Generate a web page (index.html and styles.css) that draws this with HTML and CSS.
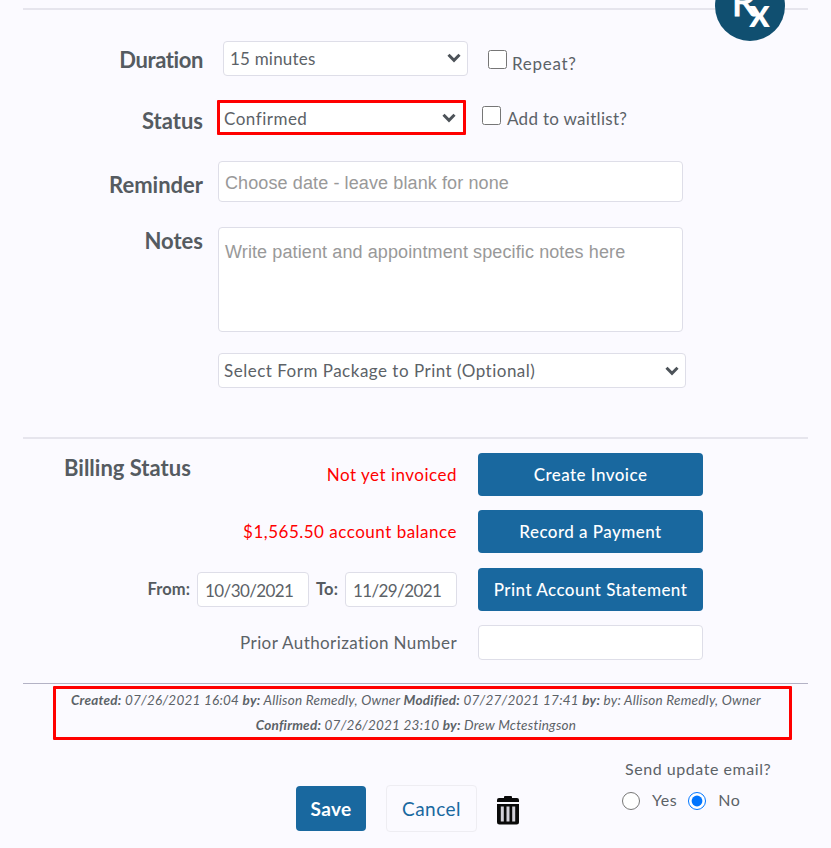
FILE: index.html
```
<!DOCTYPE html>
<html lang="en">

<head>
    <meta charset="UTF-8">
    <meta name="viewport" content="width=device-width, initial-scale=1.0">
    <title>Edit Appointment</title>
    <link rel="stylesheet" href="styles.css">
</head>

<body>
    <svg class="rx-badge" width="72" height="72" viewBox="0 0 72 72">
        <circle cx="36" cy="36" r="35" fill="#104f70" />
        <text class="rx-r" x="17.5" y="46">R</text>
        <text class="rx-x" x="35" y="57">x</text>
    </svg>

    <form class="container">
        <section class="details">
            <div class="form-row duration-row">
                <label class="row-label" for="duration">Duration</label>
                <div class="select-box duration-select">
                    <select id="duration">
                        <option>15 minutes</option>
                    </select>
                    <svg class="chevron" width="14" height="10" viewBox="0 0 14 10"><path d="M1.5 1.8 L7 7.3 L12.5 1.8" /></svg>
                </div>
                <input type="checkbox" id="repeat">
                <label class="check-label" for="repeat">Repeat?</label>
            </div>

            <div class="form-row status-row">
                <label class="row-label" for="status">Status</label>
                <div class="select-box status-select highlight">
                    <select id="status">
                        <option>Confirmed</option>
                    </select>
                    <svg class="chevron" width="14" height="10" viewBox="0 0 14 10"><path d="M1.5 1.8 L7 7.3 L12.5 1.8" /></svg>
                </div>
                <input type="checkbox" id="waitlist">
                <label class="check-label" for="waitlist">Add to waitlist?</label>
            </div>

            <div class="form-row reminder-row">
                <label class="row-label" for="reminder">Reminder</label>
                <input type="text" class="field" id="reminder" placeholder="Choose date - leave blank for none">
            </div>

            <div class="form-row notes-row">
                <label class="row-label" for="notes">Notes</label>
                <textarea class="field" id="notes" placeholder="Write patient and appointment specific notes here"></textarea>
            </div>

            <div class="form-row package-row">
                <div class="select-box package-select">
                    <select id="package">
                        <option>Select Form Package to Print (Optional)</option>
                    </select>
                    <svg class="chevron" width="14" height="10" viewBox="0 0 14 10"><path d="M1.5 1.8 L7 7.3 L12.5 1.8" /></svg>
                </div>
            </div>
        </section>

        <section class="billing">
            <h2>Billing Status</h2>
            <div class="billing-grid">
                <span class="alert">Not yet invoiced</span>
                <button type="button" class="btn">Create Invoice</button>

                <span class="alert">$1,565.50 account balance</span>
                <button type="button" class="btn">Record a Payment</button>

                <div class="date-range">
                    <label for="from">From:</label>
                    <input type="text" class="date" id="from" value="10/30/2021">
                    <label for="to">To:</label>
                    <input type="text" class="date" id="to" value="11/29/2021">
                </div>
                <button type="button" class="btn">Print Account Statement</button>

                <label class="auth-label" for="auth">Prior Authorization Number</label>
                <input type="text" class="field auth" id="auth">
            </div>
        </section>

        <section class="history highlight">
            <p><b>Created:</b> 07/26/2021 16:04 <b>by:</b> Allison Remedly, Owner <b>Modified:</b> 07/27/2021 17:41 <b>by:</b> by: Allison Remedly, Owner</p>
            <p><b>Confirmed:</b> 07/26/2021 23:10 <b>by:</b> Drew Mctestingson</p>
        </section>

        <footer class="actions">
            <button type="button" class="btn save">Save</button>
            <button type="button" class="btn cancel">Cancel</button>
            <svg class="trash" width="24" height="29" viewBox="0 0 24 29">
                <path d="M8 2 V1 Q8 0 9 0 H15 Q16 0 16 1 V2 H21 Q23 2 23 4 V6 H1 V4 Q1 2 3 2 Z" />
                <path d="M1 8 H23 V26 Q23 28.5 20.5 28.5 H3.5 Q1 28.5 1 26 Z" />
                <path class="slot" d="M6.3 10.5 V25.5 M12 10.5 V25.5 M17.7 10.5 V25.5" />
            </svg>
            <div class="email">
                <p>Send update email?</p>
                <div class="email-options">
                    <input type="radio" name="email" id="email-yes">
                    <label for="email-yes">Yes</label>
                    <input type="radio" name="email" id="email-no" checked>
                    <label for="email-no">No</label>
                </div>
            </div>
        </footer>
    </form>
</body>

</html>
```
FILE: styles.css
```
:root {
    --page: #fbfaff;
    --text: #5c6267;
    --label: #555b61;
    --border: #dedee8;
    --blue: #19689f;
    --red: #ff0000;
}

* {
    margin: 0;
    padding: 0;
    box-sizing: border-box;
}

body {
    background-color: var(--page);
    color: var(--text);
    font-family: Lato, 'Liberation Sans', sans-serif;
    font-size: 17px;
    height: 848px;
    overflow: hidden;
    position: relative;
}

input,
select,
textarea,
button {
    font-family: inherit;
    font-size: inherit;
    color: inherit;
    letter-spacing: inherit;
}

.rx-badge {
    position: absolute;
    left: 714px;
    top: -30px;
    z-index: 1;
}

.rx-badge text {
    fill: #fff;
}

.rx-r {
    font-size: 40px;
    stroke: #fff;
    stroke-width: 0.8;
}

.rx-x {
    font-size: 40px;
    font-weight: 700;
}

.container {
    width: 785px;
    margin-left: 23px;
    padding-top: 8px;
}

.details {
    border-top: 2px solid #e6e5ed;
    height: 429px;
    padding-top: 31px;
}

.form-row {
    display: flex;
    align-items: flex-start;
}

.row-label {
    width: 180px;
    text-align: right;
    font-size: 22px;
    line-height: 28px;
    font-weight: 700;
    color: var(--label);
    flex-shrink: 0;
}

.select-box {
    position: relative;
    height: 35px;
    background-color: #fff;
    border: 1.5px solid var(--border);
    border-radius: 4px;
    flex-shrink: 0;
}

.select-box select {
    appearance: none;
    width: 100%;
    height: 100%;
    border: none;
    background: transparent;
    padding-left: 6px;
    letter-spacing: 0.5px;
}

.chevron {
    position: absolute;
    right: 6px;
    top: 12px;
}

.chevron path {
    fill: none;
    stroke: #4d5359;
    stroke-width: 3;
}

.highlight {
    border: 3px solid var(--red);
    border-radius: 1px;
}

.form-row input[type="checkbox"] {
    width: 19px;
    height: 19px;
    flex-shrink: 0;
}

.check-label {
    line-height: 22px;
    letter-spacing: 0.3px;
}

.duration-row {
    height: 59px;
}

.duration-row .row-label {
    padding-top: 5px;
    letter-spacing: -0.4px;
}

.duration-select {
    width: 245px;
    margin: 0 20px;
}

.duration-select select {
    letter-spacing: 0.2px;
}

.duration-row input {
    margin-top: 9px;
}

.duration-row .check-label {
    margin: 12px 0 0 5px;
    letter-spacing: 0.7px;
}

.duration-row .chevron {
    top: 11px;
}

.status-row {
    height: 61px;
}

.status-row .row-label {
    padding-top: 7px;
}

.status-select {
    width: 249px;
    margin: 0 16px 0 14px;
}

.status-select select {
    padding: 2px 0 0 4px;
}

.status-select .chevron {
    right: 7px;
    top: 10px;
}

.status-row input {
    margin-top: 6px;
}

.status-row .check-label {
    margin: 8px 0 0 6px;
}

.field {
    background-color: #fff;
    border: 1.5px solid var(--border);
    border-radius: 4px;
}

.field::placeholder {
    color: #999;
    font-family: 'Liberation Sans', Arial, sans-serif;
    font-size: 18px;
    letter-spacing: 0.11px;
}

.reminder-row {
    height: 66px;
}

.reminder-row .row-label {
    padding-top: 10px;
}

.reminder-row .field {
    width: 465px;
    height: 41px;
    margin-left: 15px;
    padding: 2px 6px 0;
}

.notes-row {
    height: 126px;
}

.notes-row .field {
    display: block;
    width: 465px;
    height: 105px;
    margin-left: 15px;
    padding: 14px 6px;
    resize: none;
}

.package-row {
    padding-left: 195px;
}

.package-select {
    width: 468px;
}

.package-select select {
    padding-left: 5px;
}

.billing {
    display: flex;
    height: 247px;
    padding-top: 14px;
    border-top: 2px solid #e6e5ed;
    border-bottom: 1px solid #b3b2c5;
}

.billing h2 {
    width: 126px;
    margin: 1px 0 0 41px;
    font-size: 22px;
    line-height: 28px;
    color: var(--label);
    white-space: nowrap;
    flex-shrink: 0;
}

.billing-grid {
    flex: 1;
    margin-left: -67px;
    display: grid;
    grid-template-columns: 334px 225px;
    grid-auto-rows: 43px;
    gap: 14.3px 21px;
    align-items: center;
    letter-spacing: 0.5px;
}

.alert,
.auth-label {
    text-align: right;
}

.alert {
    color: var(--red);
}

.btn {
    height: 43px;
    border: none;
    border-radius: 4px;
    background-color: var(--blue);
    color: #fff;
    font-weight: 500;
    letter-spacing: 0.45px;
}

.date-range {
    display: flex;
    justify-content: flex-end;
    align-items: center;
    gap: 7px;
}

.date-range label {
    font-weight: 700;
    font-size: 16.5px;
    letter-spacing: 0.1px;
    color: var(--label);
}

.date {
    width: 112px;
    height: 35px;
    padding: 2px 0 0 7px;
    background-color: #fff;
    border: 1.5px solid var(--border);
    border-radius: 4px;
    letter-spacing: -0.6px;
}

.auth {
    height: 35px;
    align-self: start;
}

.auth-label {
    align-self: start;
    line-height: 35px;
    letter-spacing: 0.4px;
}

.history {
    width: 739px;
    height: 54px;
    margin: 2px 0 0 30px;
    padding-right: 13px;
    font-size: 13.5px;
    font-style: italic;
    letter-spacing: 0.23px;
    line-height: 25px;
    white-space: nowrap;
    display: flex;
    flex-direction: column;
    align-items: center;
    justify-content: center;
}

.actions {
    display: flex;
    align-items: flex-start;
    padding: 20px 0 0 273px;
}

.save {
    width: 70px;
    height: 45px;
    margin-top: 26px;
    font-size: 19px;
    font-weight: 700;
    letter-spacing: 0.3px;
}

.cancel {
    width: 91px;
    height: 47px;
    margin: 25px 0 0 20px;
    background-color: transparent;
    border: 1.5px solid #eeedf2;
    color: var(--blue);
    font-size: 19px;
    font-weight: 400;
}

.trash {
    margin: 36px 0 0 19px;
    fill: #0a0a0a;
}

.trash .slot {
    stroke: #d2d0d8;
    stroke-width: 3;
}

.email {
    margin-left: 102px;
    font-size: 16px;
    letter-spacing: 0.55px;
}

.email p {
    margin: -1px 0 0 3px;
    line-height: 20px;
    white-space: nowrap;
}

.email-options {
    display: flex;
    align-items: center;
    height: 20px;
    margin-top: 12px;
}

.email-options input {
    width: 18px;
    height: 18px;
}

.email-options label {
    margin: -3px 11px 0 12px;
}
```
